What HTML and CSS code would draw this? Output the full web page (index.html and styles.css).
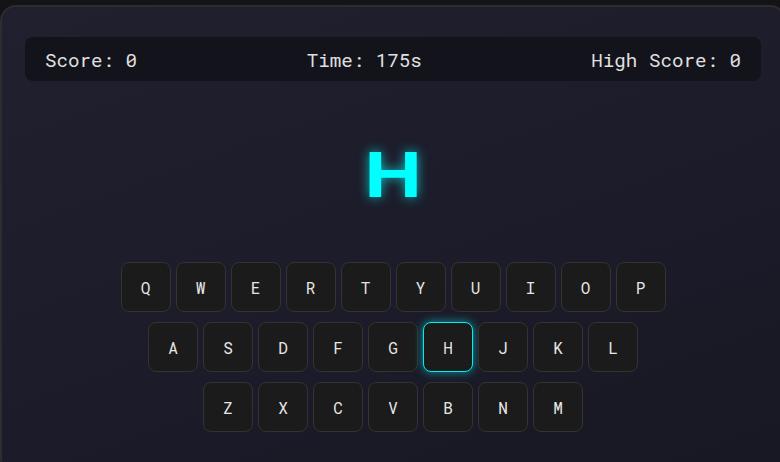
FILE: index.html
```html
<!DOCTYPE html>
<html>
<head>
<meta charset="utf-8">
<link rel="stylesheet" href="styles.css">
</head>
<body>
<div class="game">
  <div class="stats">
    <span>Score: 0</span>
    <span>Time: 175s</span>
    <span>High Score: 0</span>
  </div>
  <div class="target"><span class="target-letter">H</span></div>
  <div class="keyboard">
    <div class="row">
      <div class="key">Q</div><div class="key">W</div><div class="key">E</div><div class="key">R</div><div class="key">T</div><div class="key">Y</div><div class="key">U</div><div class="key">I</div><div class="key">O</div><div class="key">P</div>
    </div>
    <div class="row">
      <div class="key">A</div><div class="key">S</div><div class="key">D</div><div class="key">F</div><div class="key">G</div><div class="key active">H</div><div class="key">J</div><div class="key">K</div><div class="key">L</div>
    </div>
    <div class="row">
      <div class="key">Z</div><div class="key">X</div><div class="key">C</div><div class="key">V</div><div class="key">B</div><div class="key">N</div><div class="key">M</div>
    </div>
  </div>
</div>
</body>
</html>
```
FILE: styles.css
```css
html, body {
  margin: 0;
  padding: 0;
  background: #141416;
  overflow: hidden;
  width: 780px;
  height: 462px;
}
body {
  font-family: "Roboto Mono", "DejaVu Sans Mono", monospace;
  color: #e0e0e0;
}
.game {
  box-sizing: border-box;
  width: 786px;
  height: 470px;
  margin-top: 5px;
  border: 2px solid #2c2c31;
  border-radius: 16px;
  padding: 30px 23px 0 23px;
  background: linear-gradient(160deg, #20202e 0%, #1b1b29 60%, #181824 100%);
  display: flex;
  flex-direction: column;
  align-items: center;
}
.stats {
  align-self: stretch;
  height: 44px;
  box-sizing: border-box;
  display: flex;
  justify-content: space-between;
  align-items: center;
  padding: 0 20px;
  background: #13131b;
  border-radius: 8px;
  font-size: 19.2px;
}
.target {
  margin-top: 44px;
  height: 100px;
  line-height: 100px;
}
.target-letter {
  display: inline-block;
  font-family: "Liberation Sans", Arial, sans-serif;
  font-size: 64px;
  font-weight: 700;
  color: #00ffff;
  text-shadow: 0 0 10px rgba(0, 255, 255, 0.7);
  transform: scaleX(1.25);
}
.keyboard {
  margin-top: 37px;
  display: flex;
  flex-direction: column;
  gap: 10px;
  align-items: center;
}
.row {
  display: flex;
  gap: 5px;
}
.key {
  box-sizing: border-box;
  width: 50px;
  height: 50px;
  border: 1px solid #333333;
  border-radius: 8px;
  background: #1b1b1b;
  display: flex;
  align-items: center;
  justify-content: center;
  font-size: 16px;
  color: #e6e6e6;
}
.key.active {
  border-color: #00f0f0;
  box-shadow: 0 0 10px rgba(0, 255, 255, 0.55);
}
```
